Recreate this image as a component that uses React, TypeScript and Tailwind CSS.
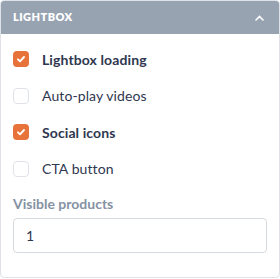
import { useState } from "react";

const items = [
  { label: "Lightbox loading", checked: true },
  { label: "Auto-play videos", checked: false },
  { label: "Social icons", checked: true },
  { label: "CTA button", checked: false },
];

function Check({ on }: { on: boolean }) {
  if (on)
    return (
      <span className="grid h-4 w-4 shrink-0 place-items-center rounded-[4px] bg-[#e8733a]">
        <svg width="10" height="10" viewBox="0 0 10 10" fill="none">
          <path d="M2 5.3l2 2 4-4.3" stroke="white" strokeWidth="1.9" strokeLinecap="round" strokeLinejoin="round" />
        </svg>
      </span>
    );
  return <span className="h-4 w-4 shrink-0 rounded-[4px] border border-[#dfe3e8] bg-white" />;
}

export default function App() {
  const [state, setState] = useState(items.map((i) => i.checked));

  return (
    <div className="h-[279px] w-[280px] bg-white font-['Lato',sans-serif]">
      <div className="h-[278px] w-[280px] overflow-hidden rounded-[4px] border border-[#dfe3e8]">
        <div className="flex h-[33px] items-center justify-between bg-[#97a3b1] pl-3 pr-[15px]">
          <span className="text-[11px] font-extrabold tracking-[0.45px] text-white">LIGHTBOX</span>
          <svg width="9" height="6" viewBox="0 0 9 6" fill="none">
            <path d="M1 5l3.5-3.5L8 5" stroke="white" strokeWidth="1.6" strokeLinecap="round" />
          </svg>
        </div>
        <div className="px-3 pt-[7px]">
          {items.map((it, i) => (
            <label
              key={it.label}
              className="flex h-[36.5px] cursor-pointer items-center gap-[13px]"
              onClick={() => setState((s) => s.map((v, j) => (j === i ? !v : v)))}
            >
              <Check on={state[i]} />
              <span
                className={`text-[14px] tracking-[0.1px] text-[#2f3750] ${state[i] ? "font-bold" : "font-normal"}`}
              >
                {it.label}
              </span>
            </label>
          ))}
          <div className="mt-[6px] text-[14px] font-bold text-[#8592a3]">Visible products</div>
          <input
            defaultValue="1"
            className="mt-[4px] h-[35px] w-[254px] rounded-[4px] border border-[#d5dae0] px-3 text-[14px] text-[#2f3750] outline-none"
          />
        </div>
      </div>
    </div>
  );
}
